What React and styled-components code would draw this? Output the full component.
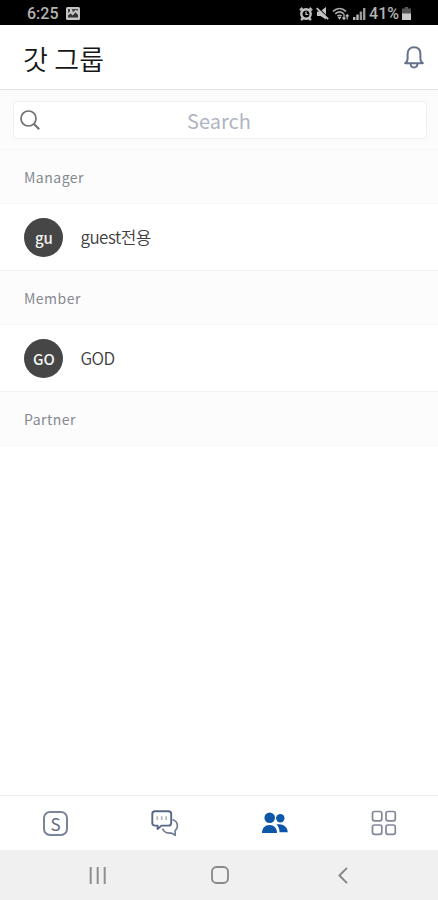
import React from "react";
import styled, { createGlobalStyle } from "styled-components";

const GlobalStyle = createGlobalStyle`
  * {
    box-sizing: border-box;
  }
  body {
    margin: 0;
    background: #ffffff;
    font-family: "Noto Sans CJK KR", "Noto Sans", sans-serif;
  }
  svg {
    display: block;
    flex: none;
  }
`;

const groups = [
  { title: "Manager", members: [{ initials: "gu", name: "guest전용" }] },
  { title: "Member", members: [{ initials: "GO", name: "GOD" }] },
  { title: "Partner", members: [] },
];

const PictureIcon = () => (
  <svg width="14" height="13" viewBox="0 0 14 13">
    <rect width="14" height="13" rx="1.5" fill="#c4c4c4" />
    <path d="M2 10.5V8.5l2.6-2 2.2 2 2.6-3.2L12 8v2.5z" fill="#333" />
    <path d="M2 2h2v2.5L2 6zM6 2h6v1.5L9.5 3 6.8 5.5z" fill="#444" />
  </svg>
);

const AlarmIcon = () => (
  <svg width="14" height="14" viewBox="0 0 14 14" fill="none">
    <path d="M1 3.3 3.5 1M13 3.3 10.5 1M2 13l2.2-2M12 13l-2.2-2" stroke="#b5b5b5" strokeWidth="2.4" />
    <circle cx="7" cy="7" r="4.7" stroke="#c4c4c4" strokeWidth="2.4" />
    <path d="M7 4.5v3h2.2" stroke="#c8c8c8" strokeWidth="1.2" />
  </svg>
);

const MuteIcon = () => (
  <svg width="13" height="13" viewBox="0 0 13 13">
    <path d="M1 4.5h3L10 0v12.5L4.5 9H1z" fill="#c4c4c4" />
    <path d="M1.5 0l12 12" stroke="#000" strokeWidth="1.2" />
    <path d="M.7 1.2l11.5 11" stroke="#c4c4c4" strokeWidth="1.8" />
  </svg>
);

const WifiIcon = () => (
  <svg width="18" height="14" viewBox="0 0 18 14" fill="none">
    <path d="M1 4.3c4-3.7 9-3.7 13 0M3.2 6.8c2.7-2.5 6-2.5 8.6 0M5.4 9.2c1.4-1.1 2.8-1.1 4.2 0" stroke="#aaa" strokeWidth="1.7" />
    <path d="M7.5 12.8 5.6 10h3.8z" fill="#bbb" />
    <path d="M12 7v5M10.5 10.5 12 12.3l1.4-1.7M15.2 12.5V7.8M13.8 9.4l1.4-1.7 1.5 1.7" stroke="#bbb" strokeWidth="1.2" />
  </svg>
);

const SignalIcon = () => (
  <svg width="13" height="13" viewBox="0 0 13 13">
    <path d="M0 10h2.4v3H0zM3.3 7.5h2.4V13H3.3z" fill="#b8b8b8" />
    <path d="M6.7 4.5h2.4V13H6.7zM10 1h2.4v12H10z" fill="#999" />
  </svg>
);

const BatteryIcon = () => (
  <svg width="9" height="13" viewBox="0 0 9 13">
    <path d="M2.8 0h3.4v1.4H9V7H0V1.4h2.8z" fill="#555" />
    <path d="M0 6.5h9V13H0z" fill="#ccc" />
  </svg>
);

const BellIcon = () => (
  <svg width="20" height="23" viewBox="0 0 20 23" fill="none" stroke="#66728c" strokeWidth="2" strokeLinejoin="round">
    <path d="M1.2 17.2c1.8-1.2 2.4-2.4 2.4-4.8V8.2C3.6 3.8 6 1.3 10 1.3s6.4 2.5 6.4 6.9v4.2c0 2.4.6 3.6 2.4 4.8z" />
    <path d="M6.5 17.5c.2 2.5 1.5 4 3.5 4s3.300-1.500 3.500-4" />
  </svg>
);

const SearchIcon = () => (
  <svg width="20" height="20" viewBox="0 0 20 20" fill="none" stroke="#6f7074">
    <circle cx="8.5" cy="8.5" r="7.5" strokeWidth="1.7" />
    <path d="M14 14l5.2 5.2" strokeWidth="2.1" />
  </svg>
);

const ChatIcon = () => (
  <svg width="28" height="27" viewBox="0 0 28 27" fill="none" strokeLinejoin="round">
    <path d="M21.5 9.5c3 1 4.9 3.3 4.9 6.3 0 2-.9 3.7-2.4 5l.3 4.5-4-2.3c-4.2.7-7.7-1.3-8.8-4.4" stroke="#717c92" strokeWidth="1.7" />
    <path d="M4 1.2h13.5c1.7 0 2.7 1 2.7 2.7v9c0 1.7-1 2.7-2.7 2.7h-7L6.6 19v-3.4H4c-1.7 0-2.7-1-2.7-2.7v-9C1.3 2.2 2.3 1.2 4 1.2z" fill="#fff" stroke="#586789" strokeWidth="1.9" />
    <path d="M6.3 6.3v3.6M10.7 6.3v3.6M15.1 6.3v3.6" stroke="#b4b7c0" strokeWidth="1.7" />
  </svg>
);

const PeopleIcon = () => (
  <svg width="26" height="22" viewBox="0 0 26 22" fill="#0d57a8">
    <circle cx="7.7" cy="5.7" r="5.3" />
    <circle cx="18.3" cy="6.2" r="4.2" />
    <path d="M0 21c0-5 3-8 7.5-8s7.5 3 7.5 8z" />
    <path d="M14.5 12.5c6-1.3 11 1.8 11.3 7.8h-8.3c0-3.2-1-5.8-3-7.8z" />
  </svg>
);

const GridIcon = () => (
  <svg width="26" height="26" viewBox="0 0 26 26" fill="none" stroke="#82879a" strokeWidth="1.7">
    <rect x="1.5" y="1.5" width="9.3" height="9.3" rx="2" />
    <rect x="15" y="1.5" width="9.3" height="9.3" rx="2" />
    <rect x="1.5" y="15" width="9.3" height="9.3" rx="2" />
    <rect x="15" y="15" width="9.3" height="9.3" rx="2" />
  </svg>
);

const RecentsIcon = () => (
  <svg width="18" height="17" viewBox="0 0 18 17" stroke="#8f8f8f" strokeWidth="2">
    <path d="M1.7 0v17M8.7 0v17M15.7 0v17" />
  </svg>
);

const HomeIcon = () => (
  <svg width="18" height="18" viewBox="0 0 18 18" fill="none" stroke="#8a8a8a" strokeWidth="1.9">
    <rect x="1" y="1" width="16" height="16" rx="4.5" />
  </svg>
);

const BackIcon = () => (
  <svg width="10" height="17" viewBox="0 0 10 17" fill="none" stroke="#858585" strokeWidth="1.9">
    <path d="M9 .8 1.4 8.5l7.6 7.700" />
  </svg>
);

const App = () => {
  return (
    <Screen>
      <GlobalStyle />
      <StatusBar>
        <StatusText>6:25</StatusText>
        <PictureIcon />
        <StatusIcons>
          <AlarmIcon />
          <MuteIcon />
          <WifiIcon />
          <SignalIcon />
          <StatusText>41%</StatusText>
          <BatteryIcon />
        </StatusIcons>
      </StatusBar>

      <Header>
        <Title>갓 그룹</Title>
        <BellIcon />
      </Header>

      <SearchArea>
        <SearchBox>
          <SearchIcon />
          <Placeholder>Search</Placeholder>
        </SearchBox>
      </SearchArea>

      <List>
        {groups.map((group) => (
          <section key={group.title}>
            <SectionTitle>{group.title}</SectionTitle>
            {group.members.map((member) => (
              <MemberRow key={member.name}>
                <Avatar>{member.initials}</Avatar>
                <MemberName>{member.name}</MemberName>
              </MemberRow>
            ))}
          </section>
        ))}
      </List>

      <TabBar>
        <Tab>
          <SquareLogo>S</SquareLogo>
        </Tab>
        <Tab>
          <ChatIcon />
        </Tab>
        <Tab>
          <PeopleIcon />
        </Tab>
        <Tab>
          <GridIcon />
        </Tab>
      </TabBar>

      <SystemNav>
        <RecentsIcon />
        <HomeIcon />
        <BackIcon />
      </SystemNav>
    </Screen>
  );
};

const Screen = styled.div`
  display: flex;
  flex-direction: column;
  width: 438px;
  height: 900px;
  overflow: hidden;
  background: #ffffff;
`;

const StatusBar = styled.div`
  display: flex;
  align-items: center;
  flex: none;
  height: 25px;
  padding: 2px 27px 0 27px;
  gap: 7px;
  background: #000000;
`;

const StatusText = styled.span`
  font-family: Roboto, sans-serif;
  font-size: 16px;
  font-weight: 500;
  line-height: 20px;
  color: #b4b4b4;
`;

const StatusIcons = styled.div`
  display: flex;
  align-items: center;
  gap: 3px;
  margin-left: auto;
`;

const Header = styled.header`
  display: flex;
  align-items: center;
  justify-content: space-between;
  flex: none;
  height: 65px;
  padding: 1px 14px 0 23px;
  border-bottom: 1px solid #e2e2e2;
`;

const Title = styled.h1`
  margin: 3px 0 0;
  font-size: 27px;
  font-weight: 350;
  line-height: 36px;
  letter-spacing: 0.2px;
  color: #161616;
`;

const SearchArea = styled.div`
  flex: none;
  height: 60px;
  padding: 11px 11px 0 13px;
  background: #fcfcfc;
  border-bottom: 1px solid #f8f8f8;
`;

const SearchBox = styled.div`
  display: flex;
  align-items: center;
  height: 38px;
  padding: 0 7px 0 6px;
  background: #ffffff;
  border: 1px solid #f0f0f0;
  border-radius: 4px;
`;

const Placeholder = styled.span`
  flex: 1;
  margin-right: 21px;
  padding-top: 1px;
  font-size: 20px;
  line-height: 28px;
  text-align: center;
  color: #b0b4c3;
`;

const List = styled.main`
  flex: 1;
`;

const SectionTitle = styled.h2`
  height: 54px;
  margin: 0;
  padding-left: 24px;
  font-size: 14px;
  font-weight: 400;
  line-height: 54px;
  letter-spacing: 0.5px;
  color: #858991;
  background: #fcfcfc;
  border-bottom: 1px solid #f7f7f7;
`;

const MemberRow = styled.div`
  display: flex;
  align-items: center;
  height: 67px;
  padding-left: 24.4px;
  gap: 17px;
  border-bottom: 1px solid #f2f2f2;
`;

const Avatar = styled.div`
  display: flex;
  align-items: center;
  justify-content: center;
  width: 39px;
  height: 39px;
  border-radius: 50%;
  font-size: 15px;
  font-weight: 500;
  color: #f4f4f4;
  background: #464646;
`;

const MemberName = styled.span`
  font-size: 17px;
  font-weight: 350;
  line-height: 24px;
  letter-spacing: -0.5px;
  color: #3f3f3f;
`;

const TabBar = styled.nav`
  display: grid;
  grid-template-columns: repeat(4, 1fr);
  flex: none;
  height: 55px;
  padding-left: 1px;
  border-top: 1px solid #ededed;
`;

const Tab = styled.div`
  display: flex;
  align-items: center;
  justify-content: center;

  &:nth-child(n + 3) {
    padding-left: 1px;
  }
`;

const SquareLogo = styled.span`
  display: flex;
  align-items: center;
  justify-content: center;
  width: 25px;
  height: 25px;
  border: 2px solid #7a859c;
  border-radius: 7px;
  font-size: 17px;
  line-height: 21px;
  color: #5f6b84;
`;

const SystemNav = styled.div`
  display: grid;
  grid-template-columns: repeat(3, 1fr);
  align-items: center;
  justify-items: center;
  flex: none;
  height: 50px;
  padding: 0 34px 0 37px;
  background: #f0f0f0;
`;

export default App;
